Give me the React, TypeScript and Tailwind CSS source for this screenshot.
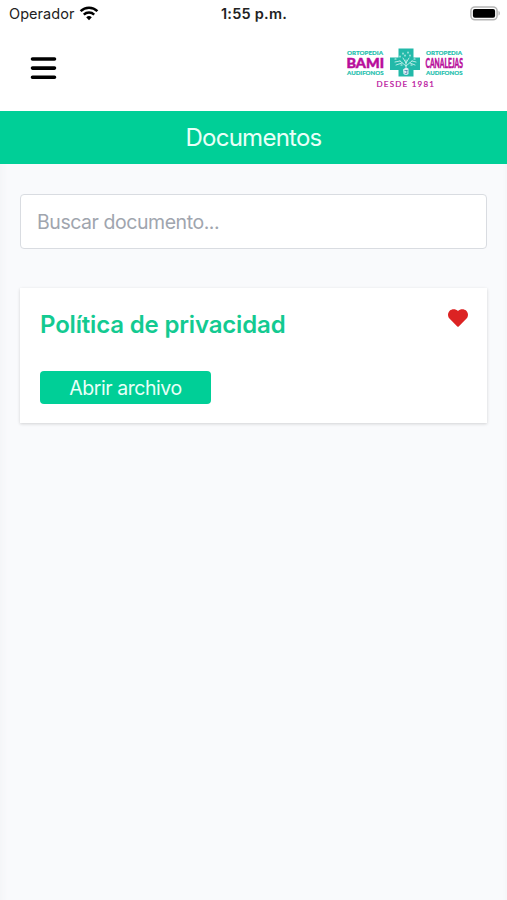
import { useState } from "react";

interface Documento {
  id: string;
  titulo: string;
  favorito: boolean;
}

const documentosIniciales: Documento[] = [
  { id: "privacidad", titulo: "Política de privacidad", favorito: true },
];

function WifiIcon() {
  return (
    <svg width="20" height="15" viewBox="0 0 20 15" fill="none" className="mb-[2px]">
      <path d="M1.6 5.1a12 12 0 0 1 16.8 0" stroke="#000" strokeWidth="2.5" />
      <path d="M4.8 8.6a7.4 7.4 0 0 1 10.4 0" stroke="#000" strokeWidth="2.4" />
      <path d="M10 14.2 7.2 11.3a4.2 4.2 0 0 1 5.6 0z" fill="#000" />
    </svg>
  );
}

function BatteryIcon() {
  return (
    <svg width="31" height="15" viewBox="0 0 31 15" className="mb-[2px]">
      <rect x="0.9" y="0.9" width="26.2" height="12.9" rx="4" fill="#fff" stroke="#b5b5b5" strokeWidth="1.5" />
      <rect x="2.9" y="2.9" width="22.2" height="8.9" rx="2" fill="#000" />
      <path d="M28.5 5.1c1.8.5 1.8 4 0 4.5z" fill="#b5b5b5" />
    </svg>
  );
}

function StatusBar() {
  return (
    <div className="grid h-7 grid-cols-3 items-center pl-[9px] pr-[6px] text-[#222]">
      <div className="flex items-center gap-[5px]">
        <span className="text-[14.5px] leading-none tracking-[0.05px]">Operador</span>
        <WifiIcon />
      </div>
      <span className="pr-[2px] text-center text-[14.5px] font-semibold leading-none tracking-[0.25px]">
        1:55 p.m.
      </span>
      <div className="flex justify-end">
        <BatteryIcon />
      </div>
    </div>
  );
}

function Logo() {
  return (
    <svg
      width="120"
      height="42"
      viewBox="0 0 120 42"
      fontFamily="Lato, sans-serif"
      className="overflow-visible"
    >
      <g fill="#1fbfae" stroke="#1fbfae" strokeWidth="0.15" fontSize="6" fontWeight="900">
        <text x="1" y="6.6" textLength="36" lengthAdjust="spacingAndGlyphs">ORTOPEDIA</text>
        <text x="1" y="27.3" textLength="36.5" lengthAdjust="spacingAndGlyphs">AUDIFONOS</text>
        <text x="80" y="6.6" textLength="36" lengthAdjust="spacingAndGlyphs">ORTOPEDIA</text>
        <text x="80" y="27.3" textLength="36.5" lengthAdjust="spacingAndGlyphs">AUDIFONOS</text>
      </g>
      <g fill="#b80d9b" stroke="#b80d9b" fontWeight="900">
        <text x="0.5" y="19.8" fontSize="13.8" strokeWidth="0.5" textLength="37.5" lengthAdjust="spacingAndGlyphs">BAMI</text>
        <text x="79.5" y="19.8" fontSize="13.8" strokeWidth="0.5" textLength="37.5" lengthAdjust="spacingAndGlyphs">CANALEJAS</text>
      </g>
      <text x="30.5" y="39" fill="#b80d9b" fontSize="8" fontWeight="400" stroke="#b80d9b" strokeWidth="0.2" textLength="57.5">DESDE 1981</text>

      <path d="M52.5.5h15v9H74v12.5h-6.500v6.500h-15v-6.500h-8.500V9.500h8.500z" fill="#22b9a9" />
      {/* Árbol dentro de la cruz */}
      <g fill="none" stroke="#d8f6f2" strokeWidth="0.8" strokeLinecap="round">
        <path d="M60 21v-9M60 18l-6-5M60 18l6-5M60 15l-3-5M60 15l3-5M54 13l-5 1M66 13l4 1M56 15l-6 2M64 15l5 2" />
        <path d="M57 5v1M62 4v1M54 8v1M59 7v1M64 7v1M49 11h1M68 11h1M55 17h1M65 17h1" strokeWidth="1.2" />
      </g>
      <path d="M57 21.500q3-3 5.500-.8v5.300q-2.500 2-5 0z" fill="#dcecf4" />
      <path d="M58.500 22.500h3M60.800 22v3.500q-1.800.7-2.300-.7" fill="none" stroke="#527eac" strokeWidth="0.8" />
    </svg>
  );
}

function Header() {
  return (
    <header className="flex h-[83px] items-start justify-between pl-[30px] pr-[41px]">
      <button aria-label="Abrir menú" className="mt-7">
        <svg width="27" height="24" viewBox="0 0 27 24" stroke="#000" strokeWidth="3.6" strokeLinecap="round">
          <path d="M2.500 3h22M2.500 12.100h22M2.500 21.200h22" />
        </svg>
      </button>
      <div className="mt-5">
        <Logo />
      </div>
    </header>
  );
}

interface DocumentoCardProps {
  documento: Documento;
  onToggleFavorito: (id: string) => void;
}

function DocumentoCard({ documento, onToggleFavorito }: DocumentoCardProps) {
  return (
    <article className="h-[135px] bg-white pl-5 pr-[19px] pt-5 shadow-[0_1px_3px_rgba(0,0,0,0.16)]">
      <div className="flex items-start justify-between">
        <h2 className="text-2xl font-semibold leading-[34px] tracking-[-0.17px] text-[#13ca91]">
          {documento.titulo}
        </h2>
        <button
          aria-label="Favorito"
          className="pt-px"
          onClick={() => onToggleFavorito(documento.id)}
        >
          <svg
            width="20"
            height="18"
            viewBox="0 0 20 18"
            fill={documento.favorito ? "#dc2323" : "#d1d5db"}
          >
            <path d="M10 2.100C7.900-.3 4-.5 1.700 1.700-.6 4-.5 7.500 1.700 9.800L9.300 17.400q.7.600 1.400 0L18.300 9.800c2.200-2.300 2.300-5.800 0-8.100C16-.5 12.100-.3 10 2.100z" />
          </svg>
        </button>
      </div>
      <button className="mt-[29px] h-[33px] w-[171px] rounded bg-[#00cf97] text-[19.5px] font-normal leading-[34px] tracking-[-0.45px] text-[#e9fff8]">
        Abrir archivo
      </button>
    </article>
  );
}

export default function App() {
  const [busqueda, setBusqueda] = useState("");
  const [documentos, setDocumentos] = useState(documentosIniciales);

  const filtrados = documentos.filter((doc) =>
    doc.titulo.toLowerCase().includes(busqueda.trim().toLowerCase()),
  );

  const toggleFavorito = (id: string) => {
    setDocumentos((prev) =>
      prev.map((doc) => (doc.id === id ? { ...doc, favorito: !doc.favorito } : doc)),
    );
  };

  return (
    <div className="flex min-h-screen flex-col bg-white font-['Inter',sans-serif]">
      <StatusBar />
      <Header />
      <h1 className="h-[53px] bg-[#00cf97] text-center text-2xl font-normal leading-[54px] tracking-[-0.75px] text-[#e9fff8]">
        Documentos
      </h1>
      <main className="flex-1 bg-[#f9fafc] px-5 pt-[30px] shadow-[inset_9px_0_5px_-5px_#f5f6f8,inset_-5px_0_3px_-3px_#f5f6f8]">
        <input
          type="text"
          value={busqueda}
          onChange={(e) => setBusqueda(e.target.value)}
          placeholder="Buscar documento..."
          className="block h-[55px] w-full rounded border border-[#d9dce1] bg-white px-4 text-[19.5px] font-normal tracking-[-0.45px] outline-none placeholder:text-[#a0a5ae]"
        />
        <div className="mt-[39px] flex flex-col gap-5">
          {filtrados.map((doc) => (
            <DocumentoCard key={doc.id} documento={doc} onToggleFavorito={toggleFavorito} />
          ))}
        </div>
      </main>
    </div>
  );
}
